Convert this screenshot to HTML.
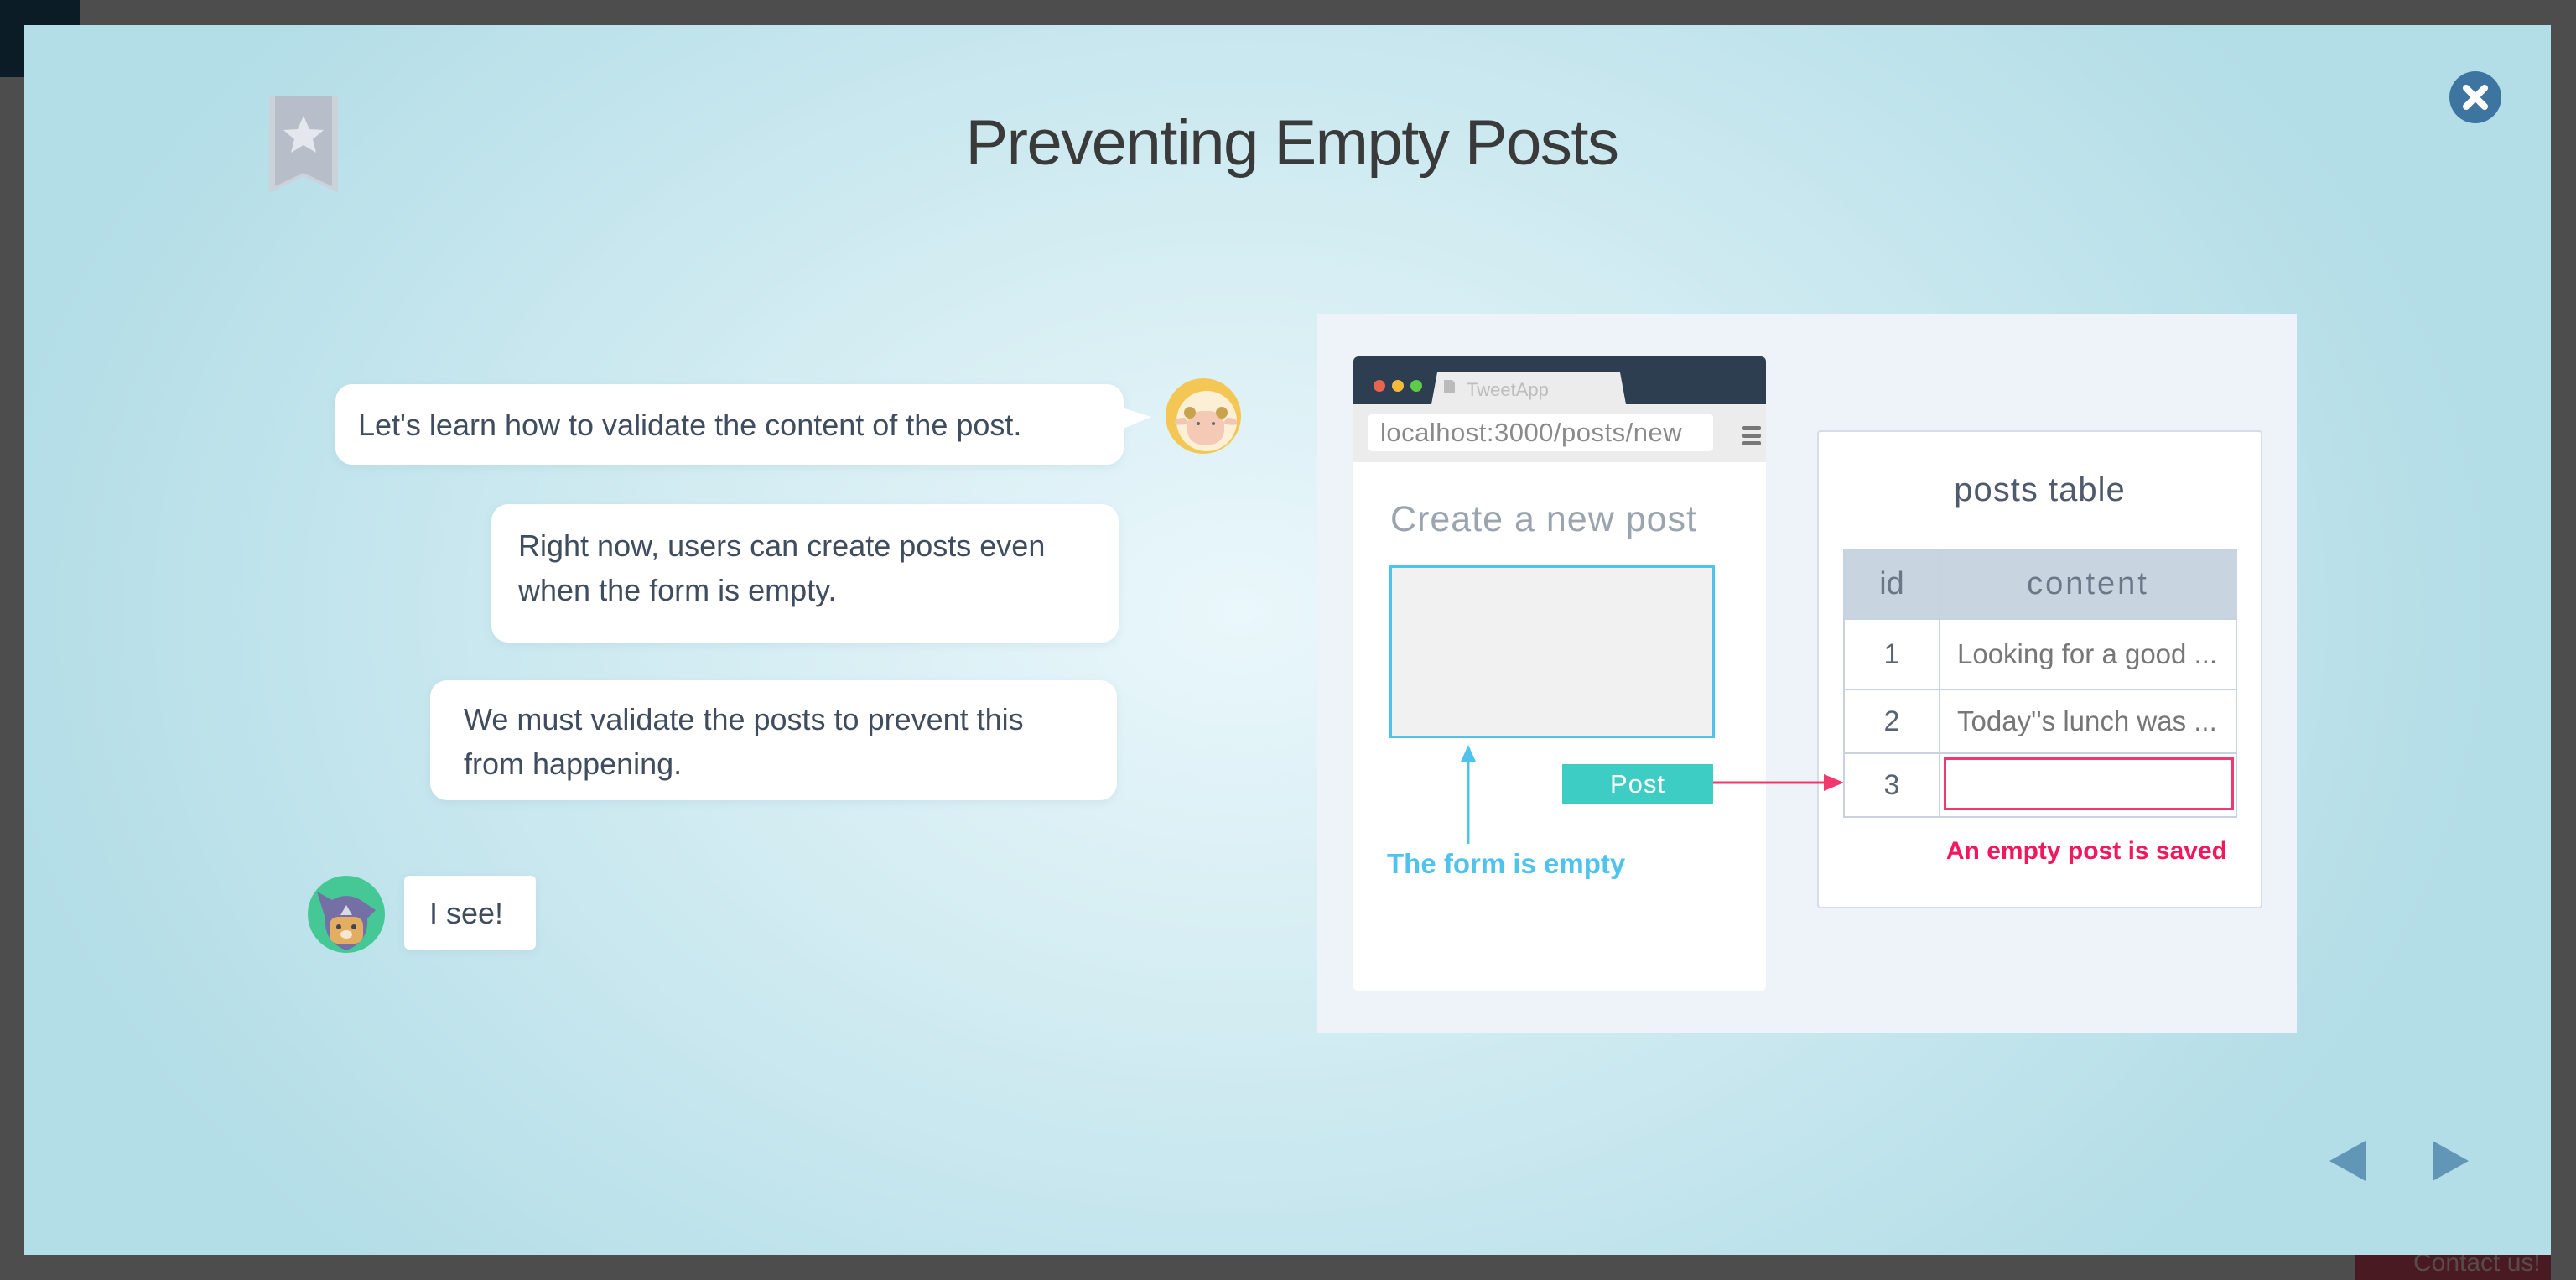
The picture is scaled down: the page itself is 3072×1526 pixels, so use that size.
<!DOCTYPE html>
<html><head><meta charset="utf-8"><style>
*{margin:0;padding:0;box-sizing:border-box}
html,body{width:3072px;height:1526px;overflow:hidden;background:#4d4d4d;font-family:"Liberation Sans",sans-serif}
.a{position:absolute}
#modal{left:29px;top:30px;width:3013px;height:1466px;background:radial-gradient(ellipse 1500px 1100px at 1450px 700px,#eaf7fb 0%,#d2ecf2 45%,#b3dde7 100%);overflow:hidden}
.bub{position:absolute;background:#fff;border-radius:20px;color:#3f4d5e;font-size:36px;line-height:53px;box-shadow:0 3px 10px rgba(120,160,180,.15)}
.cell{position:absolute;border:2px solid #c6d3de;background:#fff;color:#5a6470;font-size:34px;display:flex;align-items:center;white-space:nowrap}
</style></head><body>
<div class="a" style="left:0;top:0;width:96px;height:92px;background:#0c1c26"></div>
<div class="a" style="left:2808px;top:1489px;width:234px;height:37px;background:#4a1a22;color:#5a4a4a;font-size:30px;padding-left:70px">Contact us!</div>
<div class="a" id="modal">
  <div class="a" style="left:0;width:100%;top:97px;text-align:center;font-size:76px;color:#3a3a3a;letter-spacing:-1.5px;padding-left:10px">Preventing Empty Posts</div>
  <svg class="a" style="left:290px;top:84px" width="86" height="116" viewBox="0 0 86 116">
    <path d="M2 0H84V116L43 96L2 116Z" fill="#ccd2da"/>
    <path d="M9 0H77V108L43 92L9 108Z" fill="#b7bec9"/>
    <path d="M43 24L50 40L67 41L54 52L58 68L43 59L28 68L32 52L19 41L36 40Z" fill="#e4e8ee"/>
  </svg>
  <svg class="a" style="left:2892px;top:55px" width="62" height="62" viewBox="0 0 62 62">
    <circle cx="31" cy="31" r="31" fill="#3d75a0"/>
    <path d="M20 20L42 42M42 20L20 42" stroke="#fff" stroke-width="8" stroke-linecap="round"/>
  </svg>
  <div class="bub" style="left:371px;top:428px;width:940px;height:96px;padding:22px 27px">Let's learn how to validate the content of the post.</div>
  <svg class="a" style="left:1306px;top:455px" width="40" height="30"><path d="M0 0L38 12L0 28Z" fill="#fff"/></svg>
  <svg class="a" style="left:1360px;top:420px" width="92" height="92" viewBox="0 0 92 92">
    <circle cx="46" cy="46" r="45" fill="#f4c653"/>
    <circle cx="50" cy="52" r="36" fill="#fbf0d6"/>
    <path d="M24 48Q10 48 12 56Q22 58 28 54Z" fill="#f0c6b4"/><path d="M74 48Q88 48 86 56Q76 58 70 54Z" fill="#f0c6b4"/>
    <rect x="27" y="40" width="44" height="40" rx="17" fill="#f4c9b5"/>
    <circle cx="30" cy="42" r="7" fill="#c9a24d"/><circle cx="68" cy="42" r="7" fill="#c9a24d"/>
    <circle cx="40" cy="55" r="2" fill="#666"/><circle cx="58" cy="55" r="2" fill="#666"/>
  </svg>
  <div class="bub" style="left:557px;top:571px;width:748px;height:165px;padding:23px 32px">Right now, users can create posts even when the form is empty.</div>
  <div class="bub" style="left:484px;top:781px;width:819px;height:143px;padding:20px 40px">We must validate the posts to prevent this from happening.</div>
  <svg class="a" style="left:337px;top:1013px" width="94" height="94" viewBox="0 0 94 94">
    <circle cx="47" cy="47" r="46" fill="#45c896"/>
    <path d="M12 20L30 30Q47 20 64 30L82 42L72 52Q74 80 47 90Q20 80 22 52Z" fill="#7470a6"/>
    <rect x="27" y="50" width="40" height="32" rx="10" fill="#e3ad62"/>
    <path d="M40 48L47 36L54 48Z" fill="#d8dbe4"/>
    <circle cx="38" cy="62" r="3" fill="#445"/><circle cx="56" cy="62" r="3" fill="#445"/>
    <ellipse cx="47" cy="71" rx="7" ry="5" fill="#f6e6d4"/>
  </svg>
  <div class="bub" style="left:453px;top:1014px;width:157px;height:88px;border-radius:6px;padding:18px 0 0 30px">I see!</div>
  <div class="a" style="left:1542px;top:344px;width:1168px;height:858px;background:#eef3fa"></div>
  <div class="a" style="left:1585px;top:395px;width:492px;height:756px;background:#fff;border-radius:6px;overflow:hidden">
    <div class="a" style="left:0;top:0;width:492px;height:57px;background:#2c3e50"></div>
    <svg class="a" style="left:0;top:0" width="492" height="126">
      <circle cx="31" cy="35" r="7" fill="#e86450"/><circle cx="53" cy="35" r="7" fill="#f5b93f"/><circle cx="75" cy="35" r="7" fill="#5fcb4a"/>
      <path d="M93 57L100 19H318L325 57Z" fill="#ececec"/>
      <rect x="0" y="57" width="492" height="69" fill="#ececec"/>
      <path d="M108 28H118L121 31V43H108Z" fill="#bbb"/>
      <rect x="464" y="83" width="22" height="5" rx="2" fill="#777"/><rect x="464" y="92" width="22" height="5" rx="2" fill="#777"/><rect x="464" y="101" width="22" height="5" rx="2" fill="#777"/>
    </svg>
    <div class="a" style="left:135px;top:27px;font-size:22px;color:#bdbdbd">TweetApp</div>
    <div class="a" style="left:18px;top:69px;width:411px;height:44px;background:#fff;border-radius:4px;font-size:31px;color:#8a8a8a;padding:4px 0 0 14px;letter-spacing:.5px">localhost:3000/posts/new</div>
    <div class="a" style="left:44px;top:170px;font-size:43px;color:#9ba5b0;letter-spacing:1px">Create a new post</div>
    <div class="a" style="left:43px;top:249px;width:388px;height:206px;background:#f1f1f1;border:3px solid #4fc3ec"></div>
    <div class="a" style="left:249px;top:486px;width:180px;height:47px;background:#3ecdc4;color:#fff;font-size:31px;text-align:center;line-height:47px;letter-spacing:1px">Post</div>
    <svg class="a" style="left:122px;top:459px" width="30" height="125"><path d="M15 4L6 24H24Z" fill="#4fc3ec"/><path d="M15 18V122" stroke="#4fc3ec" stroke-width="3"/></svg>
    <div class="a" style="left:40px;top:586px;font-size:33px;color:#4fc3ec;font-weight:bold">The form is empty</div>
  </div>
  <div class="a" style="left:2138px;top:483px;width:531px;height:570px;background:#fff;border:2px solid #d6dde6;border-radius:4px"></div>
  <svg class="a" style="left:2014px;top:890px" width="156" height="26"><path d="M0 13H140" stroke="#f2386c" stroke-width="3"/><path d="M156 13L132 3V23Z" fill="#f2386c"/></svg>
  <div class="a" style="left:2138px;top:532px;width:531px;text-align:center;font-size:40px;color:#505a6e;letter-spacing:1px">posts table</div>
  <div class="cell" style="left:2169px;top:624px;width:116px;height:85px;background:#c8d5e0;justify-content:center;color:#6b7787;font-size:38px">id</div>
  <div class="cell" style="left:2283px;top:624px;width:356px;height:85px;background:#c8d5e0;justify-content:center;color:#6b7787;font-size:38px;letter-spacing:3px">content</div>
  <div class="cell" style="left:2169px;top:707px;width:116px;height:86px;justify-content:center">1</div>
  <div class="cell" style="left:2283px;top:707px;width:356px;height:86px;padding-left:20px;color:#777;font-size:33px">Looking for a good ...</div>
  <div class="cell" style="left:2169px;top:791px;width:116px;height:78px;justify-content:center">2</div>
  <div class="cell" style="left:2283px;top:791px;width:356px;height:78px;padding-left:20px;color:#777;font-size:33px">Today''s lunch was ...</div>
  <div class="cell" style="left:2169px;top:867px;width:116px;height:78px;justify-content:center">3</div>
  <div class="cell" style="left:2283px;top:867px;width:356px;height:78px"></div>
  <div class="a" style="left:2289px;top:873px;width:346px;height:63px;border:3px solid #f2386c"></div>
  <div class="a" style="left:2180px;top:968px;width:447px;text-align:right;font-size:30px;font-weight:bold;color:#f2185c;white-space:nowrap">An empty post is saved</div>
  <svg class="a" style="left:2748px;top:1330px" width="180" height="50"><path d="M1 24L44 0V48Z" fill="#6196b6"/><path d="M167 24L124 0V48Z" fill="#6196b6"/></svg>
</div>
</body></html>
